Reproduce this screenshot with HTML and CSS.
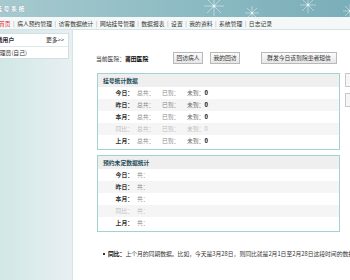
FILE: index.html
```html
<!DOCTYPE html>
<html lang="zh-CN">

<head>
    <meta charset="UTF-8">
    <meta name="viewport" content="width=device-width, initial-scale=1.0">
    <title>挂号系统</title>
    <link rel="stylesheet" href="styles.css">
</head>

<body>
    <div class="page">
        <!-- 顶部 -->
        <div class="top">
            <div class="logo">挂号系统</div>
            <svg class="flakes" width="200" height="17" viewBox="0 0 200 17">
                <g stroke="#fff" stroke-width="0.8" stroke-opacity="0.55" fill="none">
                    <path d="M44 -4v20M34 6h20M37 -1l14 14M51 -1l-14 14" />
                    <path d="M82 6v14M75 13h14M77 8l10 10M87 8l-10 10" />
                    <path d="M138 -3v16M130 5h16M132 -1l12 12M144 -1l-12 12" />
                    <path d="M180 4v14M173 11h14M175 6l10 10M185 6l-10 10" />
                </g>
                <g fill="#fff" fill-opacity="0.6">
                    <circle cx="44" cy="6" r="1.6" />
                    <circle cx="82" cy="13" r="1.2" />
                    <circle cx="138" cy="5" r="1.4" />
                    <circle cx="180" cy="11" r="1.2" />
                </g>
            </svg>
        </div>
        <!-- 导航 -->
        <div class="nav">
            <a class="on" href="javascript:;">首页</a><span class="sep">|</span>
            <a href="javascript:;">病人预约管理</a><span class="sep">|</span>
            <a href="javascript:;">访客数据统计</a><span class="sep">|</span>
            <a href="javascript:;">网站挂号管理</a><span class="sep">|</span>
            <a href="javascript:;">数据报表</a><span class="sep">|</span>
            <a href="javascript:;">设置</a><span class="sep">|</span>
            <a href="javascript:;">我的资料</a><span class="sep">|</span>
            <a href="javascript:;">系统管理</a><span class="sep">|</span>
            <a href="javascript:;">日志记录</a>
        </div>
        <div class="wrap">
            <!-- 左侧 -->
            <div class="side">
                <div class="box">
                    <div class="box-hd"><b>在线用户</b><a href="javascript:;">更多&gt;&gt;</a></div>
                    <div class="box-row">管理员(自己)</div>
                </div>
            </div>
            <!-- 主体 -->
            <div class="main">
                <div class="bar">
                    <span class="hos">当前医院：<b>莆田医院</b></span>
                    <a class="btn btn-s" href="javascript:;">回访病人</a>
                    <a class="btn btn-s" href="javascript:;">我的回访</a>
                    <a class="btn btn-l" href="javascript:;">群发今日该到院患者短信</a>
                </div>
                <div class="cols">
                    <div class="panels">
                        <div class="panel">
                            <div class="panel-hd">挂号统计数据</div>
                            <div class="row"><span class="lab">今日：</span><span class="c1">总共：</span><span class="c2">已到：</span><span class="c3">未到：<b>0</b></span></div>
                            <div class="row alt"><span class="lab">昨日：</span><span class="c1">总共：</span><span class="c2">已到：</span><span class="c3">未到：<b>0</b></span></div>
                            <div class="row"><span class="lab">本月：</span><span class="c1">总共：</span><span class="c2">已到：</span><span class="c3">未到：<b>0</b></span></div>
                            <div class="row alt dim"><span class="lab">同比：</span><span class="c1">总共：</span><span class="c2">已到：</span><span class="c3">未到：<b>0</b></span></div>
                            <div class="row"><span class="lab">上月：</span><span class="c1">总共：</span><span class="c2">已到：</span><span class="c3">未到：<b>0</b></span></div>
                        </div>
                        <div class="panel">
                            <div class="panel-hd">预约未定数据统计</div>
                            <div class="row"><span class="lab">今日：</span><span class="c1">共：</span></div>
                            <div class="row alt"><span class="lab">昨日：</span><span class="c1">共：</span></div>
                            <div class="row"><span class="lab">本月：</span><span class="c1">共：</span></div>
                            <div class="row alt dim"><span class="lab">同比：</span><span class="c1">共：</span></div>
                            <div class="row"><span class="lab">上月：</span><span class="c1">共：</span></div>
                        </div>
                    </div>
                    <div class="aside">
                        <div class="mini"></div>
                        <div class="mini"></div>
                    </div>
                </div>
                <p class="note"><i class="dot"></i><b>同比：</b>上个月的同期数据。比如，今天是3月28日，则同比就是2月1日至2月28日这段时间的数据。</p>
            </div>
        </div>
    </div>
</body>

</html>
```

FILE: styles.css
```css
* {
    margin: 0;
    padding: 0;
}

html,
body {
    overflow: hidden;
}

body {
    font-family: "Noto Sans CJK SC", "Liberation Sans", sans-serif;
    font-size: 5.8px;
    color: #333;
    background: #fff;
}

a {
    text-decoration: none;
    color: #333;
}

.page {
    width: 420px;
    margin-left: -20px;
}

.top {
    position: relative;
    height: 17px;
    background: linear-gradient(to right, #a9cbd0, #8fbcc4 45%, #74aab5);
}

.logo {
    padding-left: 16px;
    line-height: 17px;
    font-size: 6px;
    font-weight: bold;
    letter-spacing: 1.5px;
    color: #fff;
    text-shadow: 0 0 1px #5d8e98;
}

.flakes {
    position: absolute;
    top: 0;
    left: 190px;
}

.nav {
    display: flex;
    align-items: center;
    height: 12px;
    padding-left: 19px;
    background: #f4f8f8;
    border-bottom: 1px solid #d6e3e4;
    white-space: nowrap;
}

.nav .on {
    color: #e4302f;
}

.nav .sep {
    margin: 0 2.5px;
    color: #999;
}

.wrap {
    display: flex;
    min-height: 260px;
}

.side {
    width: 89px;
    padding: 3px 3px 0 0;
    background: linear-gradient(to right, #cbe5e2, #e8eff2);
    border-right: 1px solid #d6e4e6;
}

.box {
    background: #fff;
    border: 1px solid #d3e0e0;
    border-left: 0;
}

.box-hd {
    display: flex;
    justify-content: space-between;
    height: 12px;
    line-height: 12px;
    padding: 0 4px 0 11px;
    border-bottom: 1px solid #e3e9e9;
}

.box-row {
    height: 11px;
    line-height: 11px;
    padding-left: 14px;
}

.main {
    flex: 1;
    padding: 22px 0 0 23px;
}

.bar {
    display: flex;
    align-items: center;
    height: 12px;
}

.hos {
    width: 77px;
}

.hos b {
    color: #000;
}

.btn {
    display: block;
    height: 10px;
    line-height: 10px;
    text-align: center;
    background: linear-gradient(#fbfbfb, #e6e6e6);
    border: 1px solid #b9b9b9;
}

.btn-s {
    width: 28px;
    margin-right: 7px;
}

.btn-l {
    width: 74px;
    margin-left: 14px;
}

.cols {
    display: flex;
    gap: 5px;
    margin: 9px 0 0 1px;
}

.panels {
    width: 243px;
}

.panel {
    border: 1px solid #a3d3d1;
    padding-bottom: 2px;
    margin-bottom: 5px;
}

.panel-hd {
    height: 13px;
    line-height: 13px;
    padding-left: 5px;
    background: #efefef;
    font-weight: bold;
    color: #1e4b57;
}

.row {
    display: flex;
    height: 12px;
    line-height: 12px;
}

.row.alt {
    background: #f5f5f5;
}

.lab {
    width: 35px;
    text-align: right;
    font-weight: bold;
    color: #333;
}

.c1 {
    width: 25px;
    margin-left: 4px;
    color: #8a8a8a;
}

.c2 {
    width: 25px;
    color: #8a8a8a;
}

.c3 {
    color: #666;
}

.c3 b {
    color: #000;
}

.row.dim span,
.row.dim b {
    color: #bdbdbd;
    font-weight: normal;
}

.aside {
    display: flex;
    flex-direction: column;
    gap: 6px;
}

.mini {
    width: 30px;
    height: 12px;
    background: #f6f6f6;
    border: 1px solid #c8c8c8;
}

.note {
    display: flex;
    align-items: center;
    margin: 11px 0 0 1px;
    padding-left: 6px;
    line-height: 12px;
    white-space: nowrap;
}

.note .dot {
    width: 2px;
    height: 2px;
    margin-right: 3px;
    background: #333;
}

.note b {
    color: #000;
}
```
